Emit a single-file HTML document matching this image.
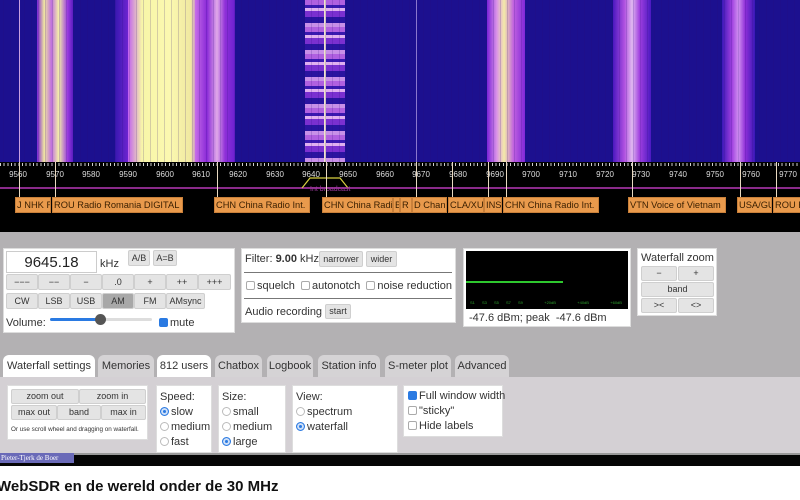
<!DOCTYPE html>
<html><head><style>
*{margin:0;padding:0;box-sizing:border-box}
body{width:800px;height:500px;overflow:hidden;background:#fff;font-family:"Liberation Sans","DejaVu Sans",sans-serif;position:relative;color:#222}
.a{position:absolute}
.wf{left:0;top:0;width:800px;height:162px;background:#1c108f;overflow:hidden}
.band{position:absolute;top:0;height:162px}
.scale{left:0;top:162px;width:800px;height:70px;background:#000}
.tk{position:absolute;top:170px;font-size:8px;color:#ddd;transform:translateX(-50%)}
.lb{position:absolute;top:197px;height:16px;background:#e99a4c;color:#3a1f00;font-size:9.3px;line-height:15px;padding-left:1px;white-space:nowrap;overflow:hidden;border:1px solid #c9803a}
.vl{position:absolute;top:162px;width:1px;height:36px;background:#e8d8c0}
.gray{left:0;top:232px;width:800px;height:223px;background:#b3b1b3}
.pn{position:absolute;background:#fff;border:1px solid #ddd}
.btn{position:absolute;background:#e4e4e4;border:1px solid #cfcfcf;font-size:9px;text-align:center;color:#333;border-radius:2px}
.tab{position:absolute;top:355px;height:22px;background:#d5d3d5;border-radius:6px 6px 0 0;font-size:11px;line-height:22px;text-align:center;color:#333}
.t11{font-size:11px;color:#333}
.cb{display:inline-block;width:9px;height:9px;border:1px solid #aaa;border-radius:2px;vertical-align:-1px;margin-right:2px;background:#fff}
.rd{display:inline-block;width:9px;height:9px;border:1px solid #bbb;border-radius:50%;vertical-align:-1px;margin-right:2px;background:#fff}
.rd.on{background:#2a7ae2;border-color:#2a7ae2;box-shadow:inset 0 0 0 2px #cfe0f8}
</style></head><body>
<div class="a wf">
 <div class="band" style="left:37px;width:36px;background:linear-gradient(90deg,#7a22d8,#f0e6a0 20%,#c070e0 40%,#f5f0a8 60%,#9a3ae0 85%,#5a1cc0)"></div>
 <div class="band" style="left:115px;width:20px;background:linear-gradient(90deg,#3818b0,#8a2ae0)"></div>
 <div class="band" style="left:128px;width:70px;background:linear-gradient(90deg,#c060f0,#f8f6a8 20%,#fbf8b0 60%,#f0e8a0 90%,#b860e8)"></div>
 <div class="band" style="left:195px;width:40px;background:linear-gradient(90deg,#c86ee8,#8a2ad8 30%,#e0a8e8 55%,#9030d8 75%,#6a20d0)"></div>
 <div class="band" style="left:305px;width:40px;background:repeating-linear-gradient(180deg,#b060e0 0 5px,#3a18b0 5px 8px,#e0b0f0 8px 11px,#7a30d0 11px 17px,#2a14a0 17px 23px,#c890e8 23px 27px)"></div>
 <div class="band" style="left:324px;width:2px;background:#f0e0d0"></div>
 <div class="band" style="left:487px;width:38px;background:linear-gradient(90deg,#7a22d8,#d890e8 25%,#f3eaa8 45%,#c060e0 70%,#8028d8)"></div>
 <div class="band" style="left:613px;width:38px;background:linear-gradient(90deg,#4a18c0,#b050e0 30%,#e0b8f0 50%,#a040e0 70%,#4a18c0)"></div>
 <div class="band" style="left:722px;width:33px;background:linear-gradient(90deg,#3a18b8,#a040e0 30%,#d090f0 50%,#9030d8 70%,#3a18b8)"></div>
 <div class="band" style="left:19px;width:1px;background:#c8a0e0"></div>
 <div class="band" style="left:416px;width:1px;background:#a090e0"></div>
 <div class="band" style="left:0;width:800px;background:repeating-linear-gradient(90deg,rgba(0,0,0,0) 0 3px,rgba(40,10,120,.18) 3px 4px,rgba(0,0,0,0) 4px 7px)"></div>
</div>
<div class="a scale"></div>
<div class="a" style="left:0;top:163px;width:800px;height:3px;background:repeating-linear-gradient(90deg,#ccc 0 1px,transparent 1px 3.67px)"></div>
<div class="a" style="left:0;top:187px;width:800px;height:2px;background:#8a2a8a"></div>
<svg class="a" style="left:300px;top:174px" width="52" height="16"><path d="M2 14 L10 4 L40 4 L48 14" stroke="#d8d040" fill="none" stroke-width="1.2"/></svg>
<div class="a" style="left:310px;top:186px;font-size:7px;color:#9a3a9a">Int broadcast</div>
<div class="tk" style="left:18px">9560</div><div class="tk" style="left:55px">9570</div><div class="tk" style="left:91px">9580</div><div class="tk" style="left:128px">9590</div><div class="tk" style="left:165px">9600</div><div class="tk" style="left:201px">9610</div><div class="tk" style="left:238px">9620</div><div class="tk" style="left:275px">9630</div><div class="tk" style="left:311px">9640</div><div class="tk" style="left:348px">9650</div><div class="tk" style="left:385px">9660</div><div class="tk" style="left:421px">9670</div><div class="tk" style="left:458px">9680</div><div class="tk" style="left:495px">9690</div><div class="tk" style="left:531px">9700</div><div class="tk" style="left:568px">9710</div><div class="tk" style="left:605px">9720</div><div class="tk" style="left:641px">9730</div><div class="tk" style="left:678px">9740</div><div class="tk" style="left:715px">9750</div><div class="tk" style="left:751px">9760</div><div class="tk" style="left:788px">9770</div>
<div class="vl" style="left:19px"></div><div class="vl" style="left:55px"></div><div class="vl" style="left:217px"></div><div class="vl" style="left:326px"></div><div class="vl" style="left:416px"></div><div class="vl" style="left:452px"></div><div class="vl" style="left:488px"></div><div class="vl" style="left:506px"></div><div class="vl" style="left:632px"></div><div class="vl" style="left:740px"></div><div class="vl" style="left:776px"></div>
<div class="lb" style="left:15px;width:36px">J NHK R</div>
<div class="lb" style="left:52px;width:131px">ROU Radio Romania DIGITAL</div>
<div class="lb" style="left:214px;width:96px">CHN China Radio Int.</div>
<div class="lb" style="left:322px;width:71px">CHN China Radi</div>
<div class="lb" style="left:393px;width:7px">B</div>
<div class="lb" style="left:400px;width:12px">R</div>
<div class="lb" style="left:412px;width:35px">D Chan</div>
<div class="lb" style="left:448px;width:36px">CLA/XU</div>
<div class="lb" style="left:484px;width:18px">INS</div>
<div class="lb" style="left:503px;width:96px">CHN China Radio Int.</div>
<div class="lb" style="left:628px;width:98px">VTN Voice of Vietnam</div>
<div class="lb" style="left:737px;width:35px">USA/GU</div>
<div class="lb" style="left:773px;width:30px">ROU R</div>
<div class="a gray"></div>
<div class="a" style="left:0;top:377px;width:800px;height:77px;background:#d4d0d4"></div>
<div class="a" style="left:0;top:453px;width:800px;height:2px;background:#999"></div>

<div class="pn" style="left:3px;top:248px;width:232px;height:85px"></div>
<div class="a" style="left:6px;top:251px;width:91px;height:22px;border:1px solid #ccc;background:#fff;font-size:15px;text-align:center;line-height:21px">9645.18</div>
<div class="a t11" style="left:100px;top:258px">kHz</div>
<div class="btn" style="left:128px;top:250px;width:22px;height:16px;line-height:14px">A/B</div>
<div class="btn" style="left:153px;top:250px;width:24px;height:16px;line-height:14px">A=B</div>
<div class="btn" style="left:6px;top:274px;width:32px;height:16px;line-height:14px">−−−</div>
<div class="btn" style="left:38px;top:274px;width:32px;height:16px;line-height:14px">−−</div>
<div class="btn" style="left:70px;top:274px;width:32px;height:16px;line-height:14px">−</div>
<div class="btn" style="left:102px;top:274px;width:32px;height:16px;line-height:14px">.0</div>
<div class="btn" style="left:134px;top:274px;width:32px;height:16px;line-height:14px">+</div>
<div class="btn" style="left:166px;top:274px;width:32px;height:16px;line-height:14px">++</div>
<div class="btn" style="left:198px;top:274px;width:33px;height:16px;line-height:14px">+++</div>
<div class="btn" style="left:6px;top:293px;width:32px;height:16px;line-height:14px">CW</div>
<div class="btn" style="left:38px;top:293px;width:32px;height:16px;line-height:14px">LSB</div>
<div class="btn" style="left:70px;top:293px;width:32px;height:16px;line-height:14px">USB</div>
<div class="btn" style="left:102px;top:293px;width:32px;height:16px;line-height:14px;background:#a8a8a8">AM</div>
<div class="btn" style="left:134px;top:293px;width:32px;height:16px;line-height:14px">FM</div>
<div class="btn" style="left:166px;top:293px;width:39px;height:16px;line-height:14px">AMsync</div>
<div class="a t11" style="left:6px;top:317px">Volume:</div>
<div class="a" style="left:50px;top:318px;width:50px;height:3px;background:#2a7ae2;border-radius:2px"></div>
<div class="a" style="left:100px;top:318px;width:52px;height:3px;background:#ddd;border-radius:2px"></div>
<div class="a" style="left:95px;top:314px;width:11px;height:11px;background:#555;border-radius:50%"></div>
<div class="a t11" style="left:159px;top:317px"><span class="cb" style="background:#2a7ae2;border-color:#2a7ae2"></span>mute</div>

<div class="pn" style="left:241px;top:248px;width:215px;height:75px"></div>
<div class="a t11" style="left:245px;top:253px">Filter: <b>9.00</b> kHz</div>
<div class="btn" style="left:319px;top:251px;width:44px;height:16px;line-height:14px">narrower</div>
<div class="btn" style="left:366px;top:251px;width:31px;height:16px;line-height:14px">wider</div>
<div class="a" style="left:244px;top:272px;width:208px;height:1px;background:#777"></div>
<div class="a t11" style="left:246px;top:280px"><span class="cb"></span>squelch <span class="cb" style="margin-left:3px"></span>autonotch <span class="cb" style="margin-left:3px"></span>noise reduction</div>
<div class="a" style="left:244px;top:298px;width:208px;height:1px;background:#777"></div>
<div class="a t11" style="left:245px;top:306px">Audio recording</div>
<div class="btn" style="left:325px;top:304px;width:26px;height:15px;line-height:13px">start</div>

<div class="pn" style="left:463px;top:248px;width:168px;height:79px"></div>
<div class="a" style="left:466px;top:251px;width:162px;height:58px;background:#000"></div>
<div class="a" style="left:466px;top:281px;width:97px;height:2px;background:#2ec82e"></div>
<div class="a" style="left:470px;top:300px;font-size:4px;color:#2ea02e;word-spacing:6px;white-space:nowrap">S1 S3 S5 S7 S9 &nbsp; +20dB &nbsp; +40dB &nbsp; +60dB</div>
<div class="a t11" style="left:469px;top:312px">-47.6 dBm; peak &nbsp;-47.6 dBm</div>

<div class="pn" style="left:637px;top:248px;width:80px;height:68px"></div>
<div class="a t11" style="left:641px;top:252px">Waterfall zoom</div>
<div class="btn" style="left:641px;top:266px;width:36px;height:15px;line-height:13px">−</div>
<div class="btn" style="left:678px;top:266px;width:36px;height:15px;line-height:13px">+</div>
<div class="btn" style="left:641px;top:282px;width:73px;height:15px;line-height:13px">band</div>
<div class="btn" style="left:641px;top:298px;width:36px;height:15px;line-height:13px">&gt;&lt;</div>
<div class="btn" style="left:678px;top:298px;width:36px;height:15px;line-height:13px">&lt;&gt;</div>

<div class="tab" style="left:3px;width:92px;background:#fff">Waterfall settings</div>
<div class="tab" style="left:98px;width:56px">Memories</div>
<div class="tab" style="left:157px;width:54px;background:#fff">812 users</div>
<div class="tab" style="left:215px;width:47px">Chatbox</div>
<div class="tab" style="left:267px;width:46px">Logbook</div>
<div class="tab" style="left:318px;width:62px">Station info</div>
<div class="tab" style="left:385px;width:66px">S-meter plot</div>
<div class="tab" style="left:455px;width:54px">Advanced</div>

<div class="pn" style="left:7px;top:385px;width:141px;height:55px"></div>
<div class="btn" style="left:11px;top:389px;width:68px;height:15px;line-height:13px">zoom out</div>
<div class="btn" style="left:79px;top:389px;width:67px;height:15px;line-height:13px">zoom in</div>
<div class="btn" style="left:11px;top:405px;width:46px;height:15px;line-height:13px">max out</div>
<div class="btn" style="left:57px;top:405px;width:44px;height:15px;line-height:13px">band</div>
<div class="btn" style="left:101px;top:405px;width:45px;height:15px;line-height:13px">max in</div>
<div class="a" style="left:11px;top:426px;font-size:6.3px;color:#333;white-space:nowrap">Or use scroll wheel and dragging on waterfall.</div>

<div class="pn" style="left:156px;top:385px;width:56px;height:68px"></div>
<div class="a t11" style="left:160px;top:390px;line-height:15px">Speed:<br><span class="rd on"></span>slow<br><span class="rd"></span>medium<br><span class="rd"></span>fast</div>
<div class="pn" style="left:218px;top:385px;width:68px;height:68px"></div>
<div class="a t11" style="left:222px;top:390px;line-height:15px">Size:<br><span class="rd"></span>small<br><span class="rd"></span>medium<br><span class="rd on"></span>large</div>
<div class="pn" style="left:292px;top:385px;width:106px;height:68px"></div>
<div class="a t11" style="left:296px;top:390px;line-height:15px">View:<br><span class="rd"></span>spectrum<br><span class="rd on"></span>waterfall</div>
<div class="pn" style="left:403px;top:385px;width:100px;height:52px"></div>
<div class="a t11" style="left:408px;top:389px;line-height:15px;white-space:nowrap"><span class="cb" style="background:#2a7ae2;border-color:#2a7ae2"></span>Full window width<br><span class="cb"></span>"sticky"<br><span class="cb"></span>Hide labels</div>

<div class="a" style="left:0;top:455px;width:800px;height:11px;background:#050505"></div>
<div class="a" style="left:0;top:453px;width:74px;height:10px;background:#6a6ab8;color:#fff;font-size:7px;line-height:10px;padding-left:1px;font-family:'Liberation Serif',serif">Pieter-Tjerk de Boer</div>
<div class="a" style="left:-3px;top:478px;font-size:15px;font-weight:bold;color:#111;white-space:nowrap">WebSDR en de wereld onder de 30 MHz</div>
</body></html>
